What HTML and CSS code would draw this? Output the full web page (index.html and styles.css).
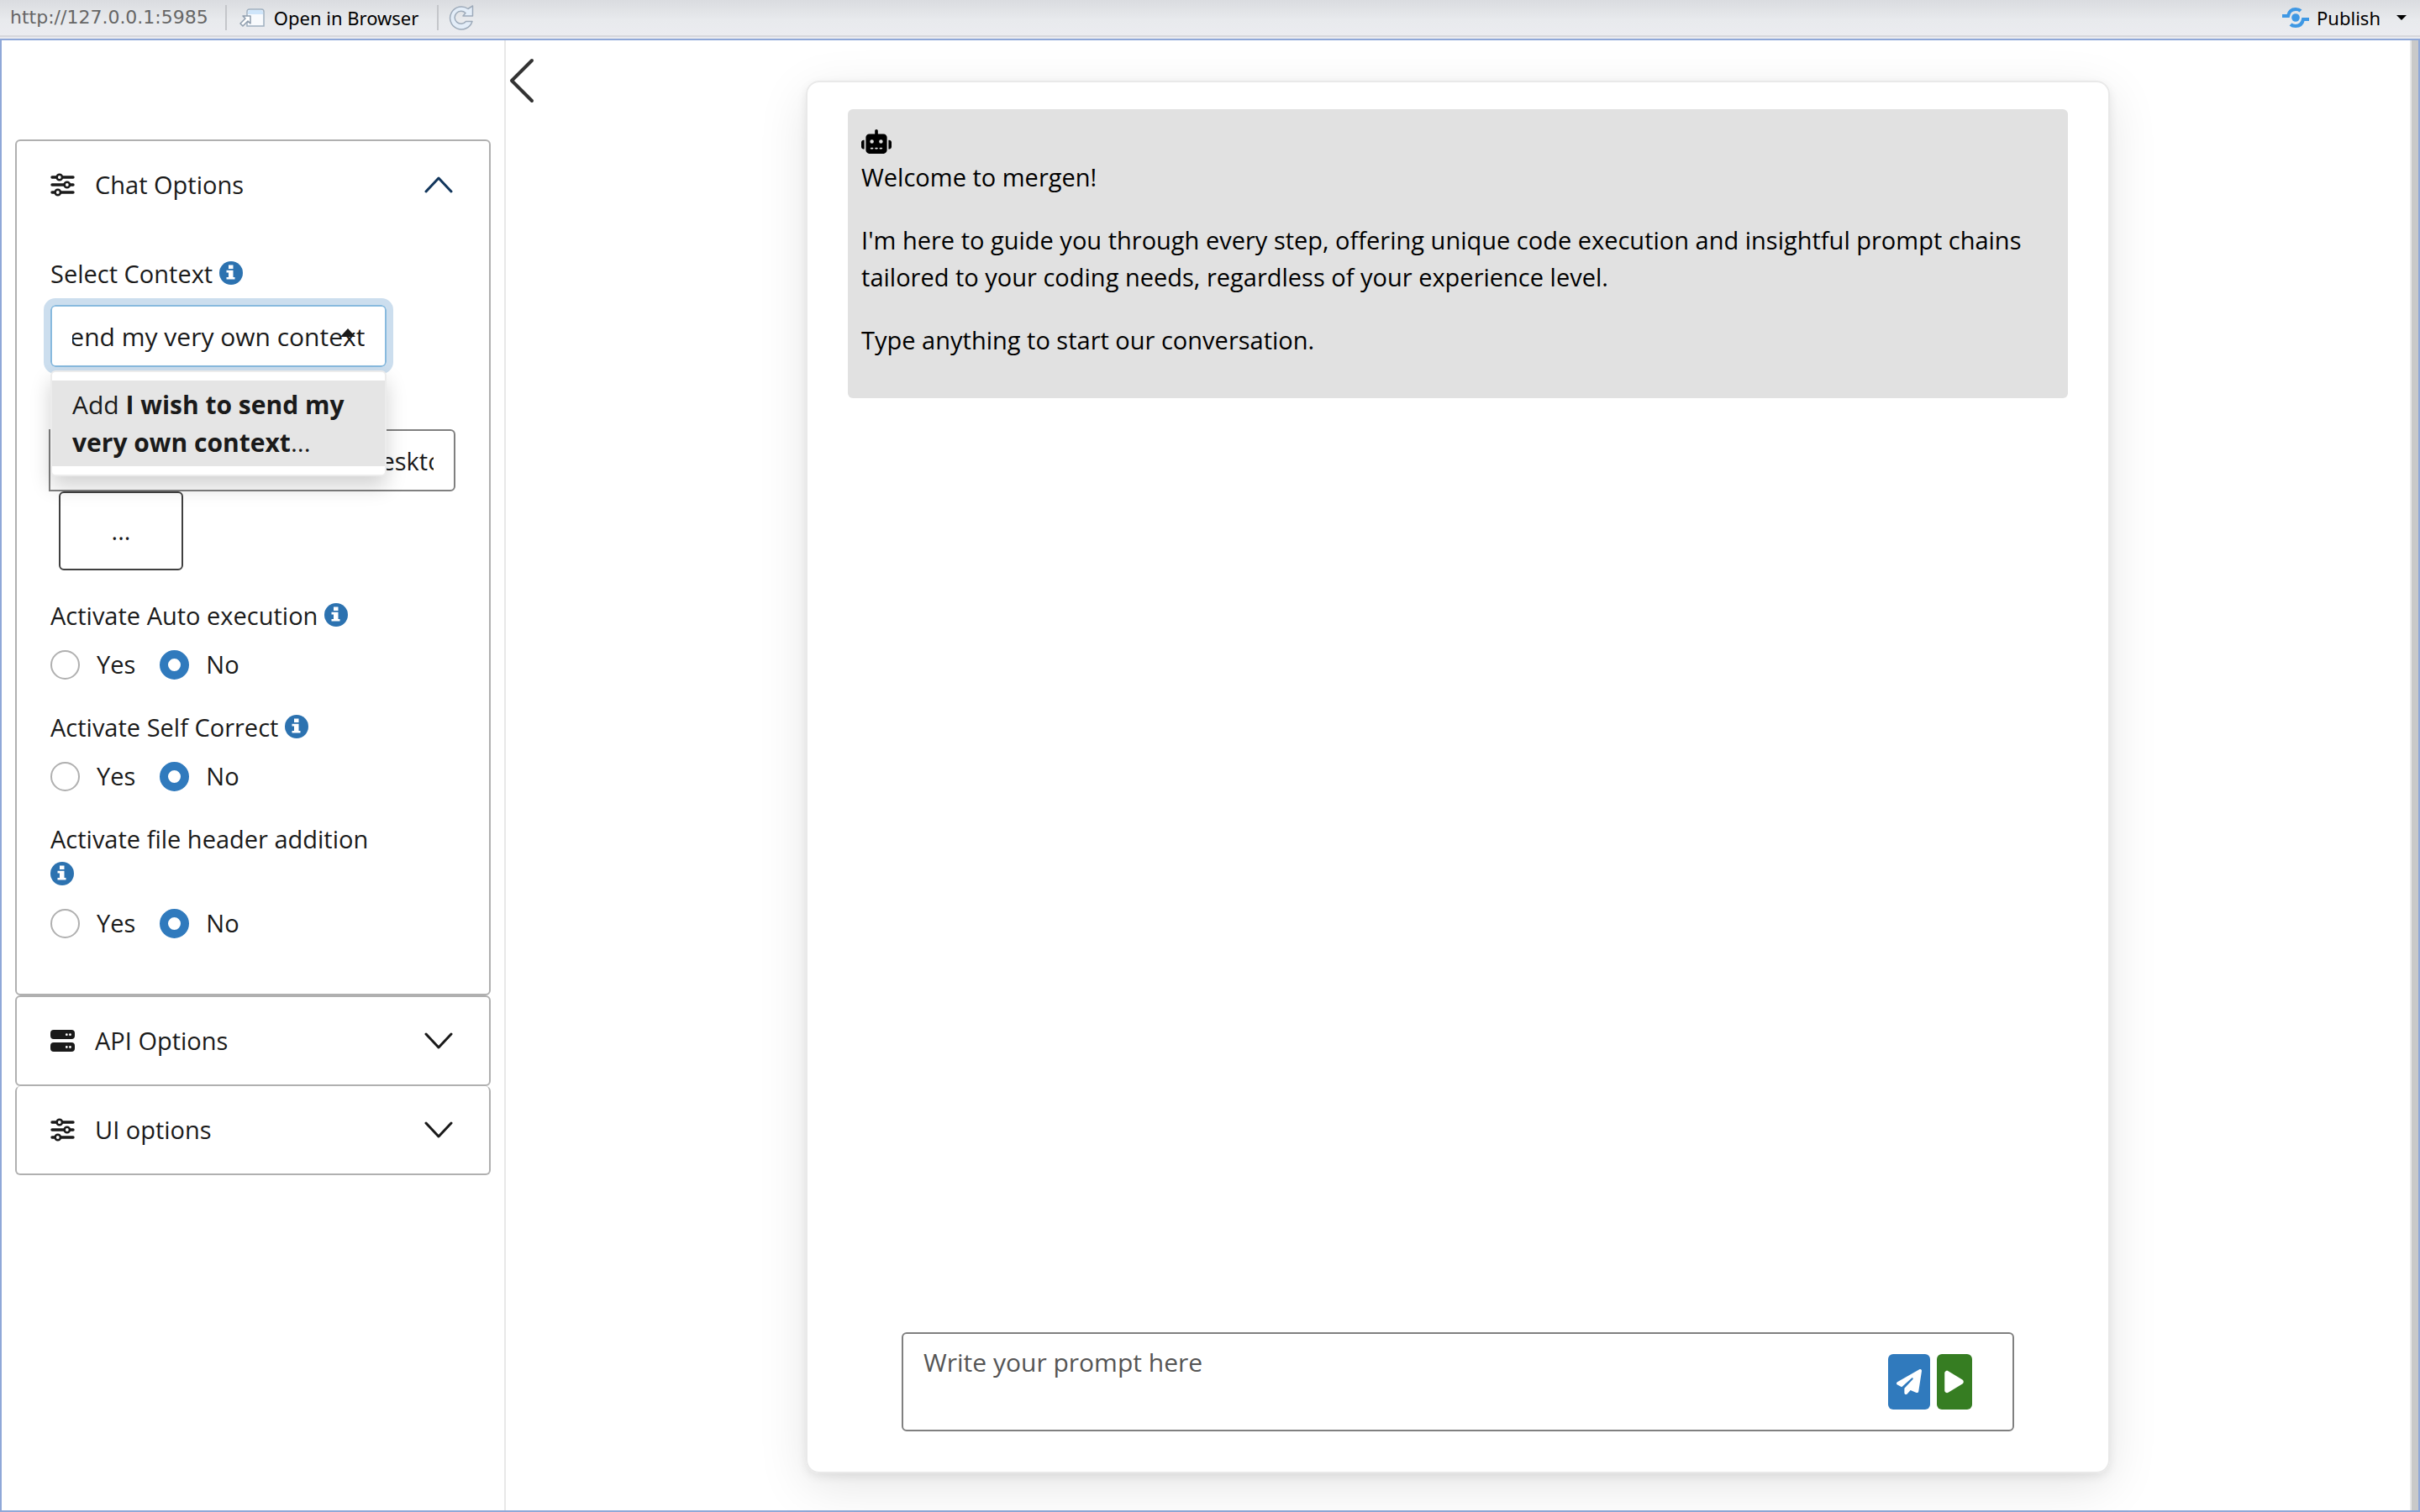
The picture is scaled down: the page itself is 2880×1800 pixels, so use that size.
FILE: index.html
```html
<!DOCTYPE html>
<html lang="en">
<head>
<meta charset="utf-8">
<title>mergen</title>
<link rel="stylesheet" href="styles.css">
</head>
<body>
<svg class="sprite" aria-hidden="true">
  <symbol id="i-sliders" viewBox="0 0 29 28"><g fill="none" stroke="currentColor" stroke-width="3.400" stroke-linecap="round"><path d="M2 5h5M15 5h12M2 14h14M24 14h3M2 23h3M13 23h14"/><g stroke-width="2.600"><circle cx="10.800" cy="5" r="3.200"/><circle cx="19.800" cy="14" r="3.200"/><circle cx="8.800" cy="23" r="3.200"/></g></g></symbol>
  <symbol id="i-server" viewBox="0 0 29 26"><path fill="currentColor" fill-rule="evenodd" d="M4 0h21a4 4 0 0 1 4 4v3a4 4 0 0 1-4 4H4a4 4 0 0 1-4-4V4a4 4 0 0 1 4-4zM19.300 4.300a1.400 1.400 0 1 0 0 2.800 1.400 1.400 0 0 0 0-2.800zm4.200 0a1.400 1.400 0 1 0 0 2.800 1.400 1.400 0 0 0 0-2.800zM4 15h21a4 4 0 0 1 4 4v3a4 4 0 0 1-4 4H4a4 4 0 0 1-4-4v-3a4 4 0 0 1 4-4zm15.300 4.100a1.400 1.400 0 1 0 0 2.800 1.400 1.400 0 0 0 0-2.800zm4.200 0a1.400 1.400 0 1 0 0 2.800 1.400 1.400 0 0 0 0-2.800z"/></symbol>
  <symbol id="i-info" viewBox="0 0 28 28"><circle cx="14" cy="14" r="14" fill="currentColor"/><path fill="#fff" d="M11 4.500h5.500v4.500H11zM8.500 10.800h8v8.200h2v2.500h-10V19h2.500v-5.500H8.500z"/></symbol>
  <symbol id="i-chevron" viewBox="0 0 34 20"><path d="M2 2l15 16L32 2" fill="none" stroke="currentColor" stroke-width="3" stroke-linecap="round" stroke-linejoin="round"/></symbol>
</svg>

<header class="toolbar">
  <span class="url">http://127.0.0.1:5985</span>
  <button class="tool tool-open" type="button">
    <svg width="30" height="24" viewBox="0 0 30 24"><path d="M9 5a3 3 0 0 1 3-3h14a3 3 0 0 1 3 3v17H9z" fill="#f8fafd" stroke="#9fb0c0" stroke-width="1.500"/><path d="M10 6a3 3 0 0 1 3-3h12a3 3 0 0 1 3 3v2H10z" fill="#cfe5fa"/><path d="M4 10h9v9l-3-3-6 6-3-3 6-6z" fill="#fff" stroke="#8f9dad" stroke-width="1.500" stroke-linejoin="round"/></svg>
    Open in Browser
  </button>
  <button class="tool tool-refresh" type="button" aria-label="Refresh">
    <svg width="30" height="32" viewBox="0 0 30 32"><path d="M23 5.500L28.500 2v12H17l3-3.500A7.500 7.500 0 1 0 20.500 20.500H28A13.500 13.500 0 1 1 23 5.500z" fill="#e3edf8" stroke="#9eabba" stroke-width="1.500" stroke-linejoin="round"/></svg>
  </button>
  <button class="tool tool-publish" type="button">
    <svg width="32" height="26" viewBox="0 0 32 26"><g fill="none" stroke="#3f98e4" stroke-width="4"><path d="M0 11h7c1-5 4-8 9-8 3 0 4 0 6 2"/><path d="M32 15h-7c-1 5-4 8-9 8-3 0-4 0-6-2"/></g><circle cx="16" cy="13" r="4.800" fill="#3f98e4"/></svg>
    Publish
    <span class="caret"></span>
  </button>
</header>

<div class="viewer">
  <aside class="sidebar">
    <section class="panel">
      <button class="panel-head open" type="button"><svg class="lead"><use href="#i-sliders"/></svg><span>Chat Options</span><svg class="chev"><use href="#i-chevron"/></svg></button>
      <div class="panel-body">
        <div class="field">
          <label class="field-label" for="context">Select Context <svg class="info"><use href="#i-info"/></svg></label>
          <div class="combo">
            <input id="context" class="combo-input" type="text" value="I wish to send my very own context">
            <ul class="menu"><li class="menu-item">Add <strong>I wish to send my very own context</strong>...</li></ul>
          </div>
        </div>
        <div class="path">
          <input class="path-input" type="text" aria-label="Directory" value="/Users/team/my-projects/Desktop">
          <button class="path-button" type="button">...</button>
        </div>
        <fieldset class="choice">
          <legend class="field-label">Activate Auto execution <svg class="info"><use href="#i-info"/></svg></legend>
          <div class="radios"><label><input type="radio" name="auto">Yes</label><label><input type="radio" name="auto" checked>No</label></div>
        </fieldset>
        <fieldset class="choice">
          <legend class="field-label">Activate Self Correct <svg class="info"><use href="#i-info"/></svg></legend>
          <div class="radios"><label><input type="radio" name="self">Yes</label><label><input type="radio" name="self" checked>No</label></div>
        </fieldset>
        <fieldset class="choice">
          <legend class="field-label">Activate file header addition <svg class="info"><use href="#i-info"/></svg></legend>
          <div class="radios"><label><input type="radio" name="file">Yes</label><label><input type="radio" name="file" checked>No</label></div>
        </fieldset>
      </div>
    </section>
    <section class="panel">
      <button class="panel-head" type="button"><svg class="lead"><use href="#i-server"/></svg><span>API Options</span><svg class="chev"><use href="#i-chevron"/></svg></button>
    </section>
    <section class="panel joined">
      <button class="panel-head" type="button"><svg class="lead"><use href="#i-sliders"/></svg><span>UI options</span><svg class="chev"><use href="#i-chevron"/></svg></button>
    </section>
  </aside>

  <main class="main">
    <button class="collapse" type="button" aria-label="Collapse sidebar"><svg width="30" height="54" viewBox="0 0 30 54"><path d="M27 3L3 27l24 24" fill="none" stroke="#333" stroke-width="4" stroke-linecap="round" stroke-linejoin="round"/></svg></button>
    <div class="card">
      <article class="message">
        <svg class="robot" viewBox="0 0 640 512"><path d="M320 0c17.700 0 32 14.300 32 32v64h120c39.800 0 72 32.200 72 72v272c0 39.800-32.200 72-72 72H168c-39.800 0-72-32.200-72-72V168c0-39.800 32.200-72 72-72h120V32c0-17.700 14.300-32 32-32zM208 384c-8.800 0-16 7.200-16 16s7.200 16 16 16h32c8.800 0 16-7.200 16-16s-7.200-16-16-16h-32zm96 0c-8.800 0-16 7.200-16 16s7.200 16 16 16h32c8.800 0 16-7.200 16-16s-7.200-16-16-16h-32zm96 0c-8.800 0-16 7.200-16 16s7.200 16 16 16h32c8.800 0 16-7.200 16-16s-7.200-16-16-16h-32zM264 256a40 40 0 1 0-80 0 40 40 0 1 0 80 0zm152 40a40 40 0 1 0 0-80 40 40 0 1 0 0 80zM48 224h16v192H48c-26.500 0-48-21.500-48-48v-96c0-26.500 21.500-48 48-48zm544 0c26.500 0 48 21.500 48 48v96c0 26.500-21.500 48-48 48h-16V224h16z"/></svg>
        <p>Welcome to mergen!</p>
        <p>I'm here to guide you through every step, offering unique code execution and insightful prompt chains tailored to your coding needs, regardless of your experience level.</p>
        <p>Type anything to start our conversation.</p>
      </article>
      <form class="prompt">
        <textarea class="prompt-text" placeholder="Write your prompt here" aria-label="Prompt"></textarea>
        <button class="send" type="button" aria-label="Send"><svg width="30" height="30" viewBox="0 0 512 512"><path fill="#fff" d="M498.100 5.600c10.100 7 15.400 19.100 13.500 31.200l-64 416c-1.500 9.700-7.400 18.200-16 23s-18.900 5.400-28 1.600L284 427.700l-68.500 74.100c-8.900 9.700-22.900 12.900-35.200 8.100S160 493.200 160 480v-83.600c0-4 1.500-7.800 4.200-10.700l167.600-182.900c5.800-6.300 5.600-16-.4-22s-15.700-6.400-22-.7L106 360.800l-88.300-44.200C7.100 311.300.3 300.700 0 288.900s5.900-22.800 16.100-28.700l448-256c10.700-6.100 23.900-5.500 34 1.400z"/></svg></button>
        <button class="run" type="button" aria-label="Run"><svg width="23" height="30" viewBox="0 0 384 512"><path fill="#fff" d="M73 39c-14.800-9.100-33.400-9.400-48.500-.9S0 62.600 0 80v352c0 17.400 9.400 33.400 24.500 41.900s33.700 8.100 48.500-.9l288-176c14.300-8.700 23-24.200 23-41s-8.700-32.200-23-41z"/></svg></button>
      </form>
    </div>
  </main>
  <div class="scrollbar"></div>
</div>
<script src="script.js"></script>
</body>
</html>
```
FILE: script.js
```js
// Keep the end of the typed context in view.
const context = document.getElementById('context');
context.scrollLeft = context.scrollWidth;
```
FILE: styles.css
```css
* { box-sizing: border-box; }
body {
  margin: 0;
  min-height: 100vh;
  display: flex;
  flex-direction: column;
  font: 29px/44px "Open Sans", sans-serif;
  color: #1a1a1a;
  background: #fff;
}
button, input, textarea { font: inherit; color: inherit; }
button { background: none; border: 0; padding: 0; }
.sprite { display: none; }

.toolbar {
  height: 46px;
  display: flex;
  align-items: center;
  padding: 0 16px 4px 12px;
  background: linear-gradient(#dadce0, #e8eaed 24px, #ebecf0 42px, #d6d7dc 42px, #d6d7dc 44px, #e9eaee 44px);
  font: 22px/30px "Noto Sans", sans-serif;
  color: #000;
}
.url { color: #666; padding-right: 20px; font-family: "DejaVu Sans", sans-serif; }
.tool { display: flex; align-items: center; }
.tool-open, .tool-refresh { border-left: 2px solid #c4c6ca; height: 30px; padding: 0 22px 0 15px; }
.tool-open { gap: 11px; }
.tool-refresh { padding: 0 0 0 12px; }
.tool-publish { margin-left: auto; gap: 9px; }
.caret { margin-left: 10px; border: 6px solid transparent; border-top-color: #000; border-bottom: 0; }

.viewer { flex: 1; display: flex; border: 2px solid #8fa8d8; }
.sidebar { width: 600px; padding: 118px 16px 0; border-right: 2px solid #e8e8e8; }
.panel { border: 2px solid #b0b0b0; border-radius: 6px; }
.joined { border-top: 0; }
.panel-head {
  width: 100%;
  height: 104px;
  padding: 0 43px 0 40px;
  display: flex;
  align-items: center;
  gap: 24px;
}
.lead { width: 29px; height: 28px; }
.chev { width: 34px; height: 20px; margin-left: auto; }
.open .chev { transform: rotate(180deg); color: #12365c; }
.panel-body { padding: 33px 40px 30px; }
.field-label { display: block; width: 400px; padding: 0; line-height: 42px; }
.info { width: 28px; height: 28px; color: #2c72b0; vertical-align: -2px; }

.combo { position: relative; width: 400px; margin-top: 16px; font-size: 30px; }
.combo-input {
  display: block;
  width: 100%;
  height: 74px;
  padding: 0 24px;
  border: 2px solid #88bade;
  border-radius: 6px;
  outline: 8px solid #ccdeee;
  background: #fff;
}
.combo::after {
  content: "";
  position: absolute;
  right: 37px;
  top: 28px;
  border: 9px solid transparent;
  border-bottom: 10px solid #1a1a1a;
  border-top: 0;
}
.menu {
  position: absolute;
  z-index: 1;
  top: 100%;
  left: 0;
  width: 100%;
  margin: 4px 0 0;
  padding: 10px 0;
  list-style: none;
  background: #fff;
  border: 2px solid #ececec;
  border-radius: 6px;
  box-shadow: 0 12px 24px rgba(0, 0, 0, .18);
}
.menu-item { padding: 6px 24px; line-height: 45px; background: #e5e5e5; }
.path { margin: 74px 0 33px -2px; }
.path-input {
  display: block;
  width: 484px;
  height: 74px;
  padding: 0 24px;
  border: 2px solid #808080;
  border-radius: 0 6px 6px 0;
}
.path-button {
  width: 148px;
  height: 94px;
  margin-left: 12px;
  border: 2px solid #404040;
  border-radius: 6px;
  display: block;
}
.choice { margin: 0 0 34px; padding: 0; border: 0; min-width: 0; }
.radios { display: flex; gap: 29px; padding-top: 17px; line-height: 40px; }
.radios label { display: flex; align-items: center; gap: 20px; }
.radios input {
  appearance: none;
  width: 35px;
  height: 35px;
  margin: 0;
  border: 2px solid #b0b0b0;
  border-radius: 50%;
}
.radios input:checked { border: 10px solid #307abd; }

.main { flex: 1; min-width: 0; display: flex; flex-direction: column; position: relative; }
.collapse { position: absolute; left: 4px; top: 21px; line-height: 0; }
.card {
  flex: 1;
  width: calc(68% + 11px);
  margin: 48px auto 44px;
  padding: 32px 48px 48px;
  display: flex;
  flex-direction: column;
  border: 2px solid #e9e9e9;
  border-radius: 16px;
  box-shadow: 0 16px 60px rgba(0, 0, 0, .1), 0 4px 12px rgba(0, 0, 0, .08);
}
.message { padding: 24px 16px; background: #e1e1e1; border-radius: 6px; color: #000; }
.robot { display: block; width: 36px; height: 29px; margin-bottom: 6px; }
.message p { margin: 0 0 31px; }
.message p:last-child { margin-bottom: 23px; }
.prompt {
  height: 118px;
  margin: auto 64px 0;
  padding: 0 48px 0 0;
  display: flex;
  align-items: center;
  gap: 8px;
  border: 2px solid #808080;
  border-radius: 6px;
}
.prompt-text { flex: 1; height: 100%; padding: 12px 24px; border: 0; resize: none; background: none; font-size: 30px; }
.prompt-text::placeholder { color: #555; }
.send, .run { width: 50px; height: 66px; border-radius: 6px; background: #307abd; display: grid; place-items: center; }
.run { width: 42px; background: #367d22; }
.scrollbar { width: 10px; border-left: 2px solid #e9e9e9; background: #c9c9c9; }
```
